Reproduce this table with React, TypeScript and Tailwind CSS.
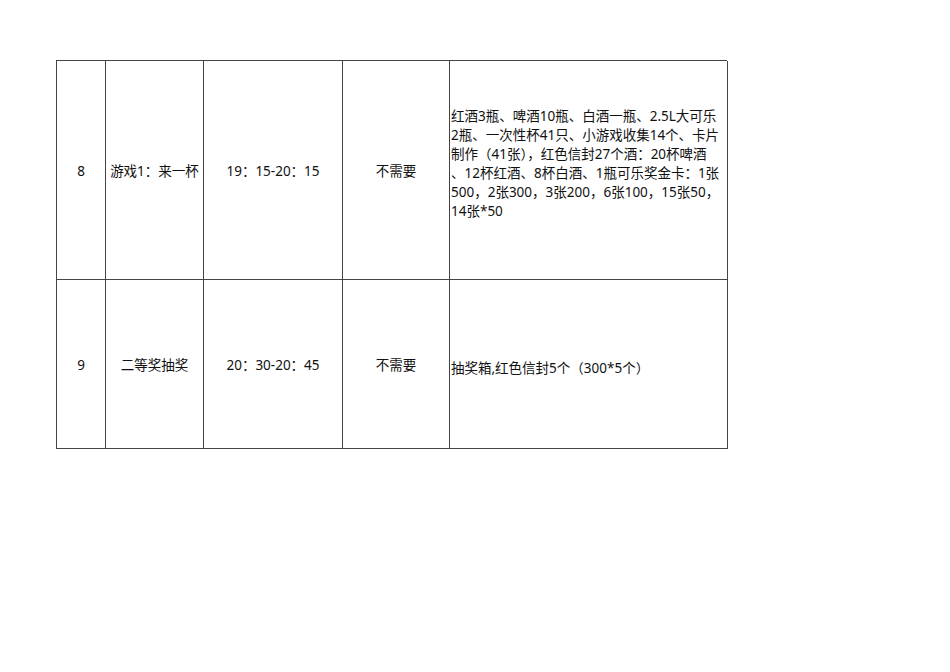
const rows = [
  {
    no: '8',
    name: '游戏1：来一杯',
    time: '19：15-20：15',
    need: '不需要',
    lines: [
      '红酒3瓶、啤酒10瓶、白酒一瓶、2.5L大可乐',
      '2瓶、一次性杯41只、小游戏收集14个、卡片',
      '制作（41张），红色信封27个酒：20杯啤酒',
      '、12杯红酒、8杯白酒、1瓶可乐奖金卡：1张',
      '500，2张300，3张200，6张100，15张50，',
      '14张*50',
    ],
    height: 'h-[219px]',
    pad: 'pb-[13px]',
  },
  {
    no: '9',
    name: '二等奖抽奖',
    time: '20：30-20：45',
    need: '不需要',
    lines: ['抽奖箱,红色信封5个（300*5个）'],
    height: 'h-[169px]',
    pad: 'pt-[8px]',
  },
];

export default function App() {
  return (
    <div
      className="min-h-[672px] w-[950px] bg-white pt-[60px] pl-[56px] text-[13.5px] leading-[19px] text-[#111]"
      style={{ fontFamily: '"Noto Sans", "Noto Sans CJK SC", sans-serif' }}
    >
      <div className="grid w-[671px] grid-cols-[49px_98px_139px_107px_278px] border-t border-l border-[#444]">
        {rows.map((r) => (
          <div key={r.no} className="contents">
            <div className={`${r.height} flex items-center justify-center border-r border-b border-[#444] pt-[2px]`}>{r.no}</div>
            <div className={`${r.height} flex items-center justify-center border-r border-b border-[#444] pt-[2px] whitespace-nowrap`}>{r.name}</div>
            <div className={`${r.height} flex items-center justify-center border-r border-b border-[#444] pt-[2px] whitespace-nowrap`}>{r.time}</div>
            <div className={`${r.height} flex items-center justify-center border-r border-b border-[#444] pt-[2px]`}>{r.need}</div>
            <div className={`${r.height} ${r.pad} flex flex-col justify-center border-r border-b border-[#444] pl-[1px]`}>
              {r.lines.map((l, i) => (
                <div key={i} className="whitespace-nowrap">{l}</div>
              ))}
            </div>
          </div>
        ))}
      </div>
    </div>
  );
}
